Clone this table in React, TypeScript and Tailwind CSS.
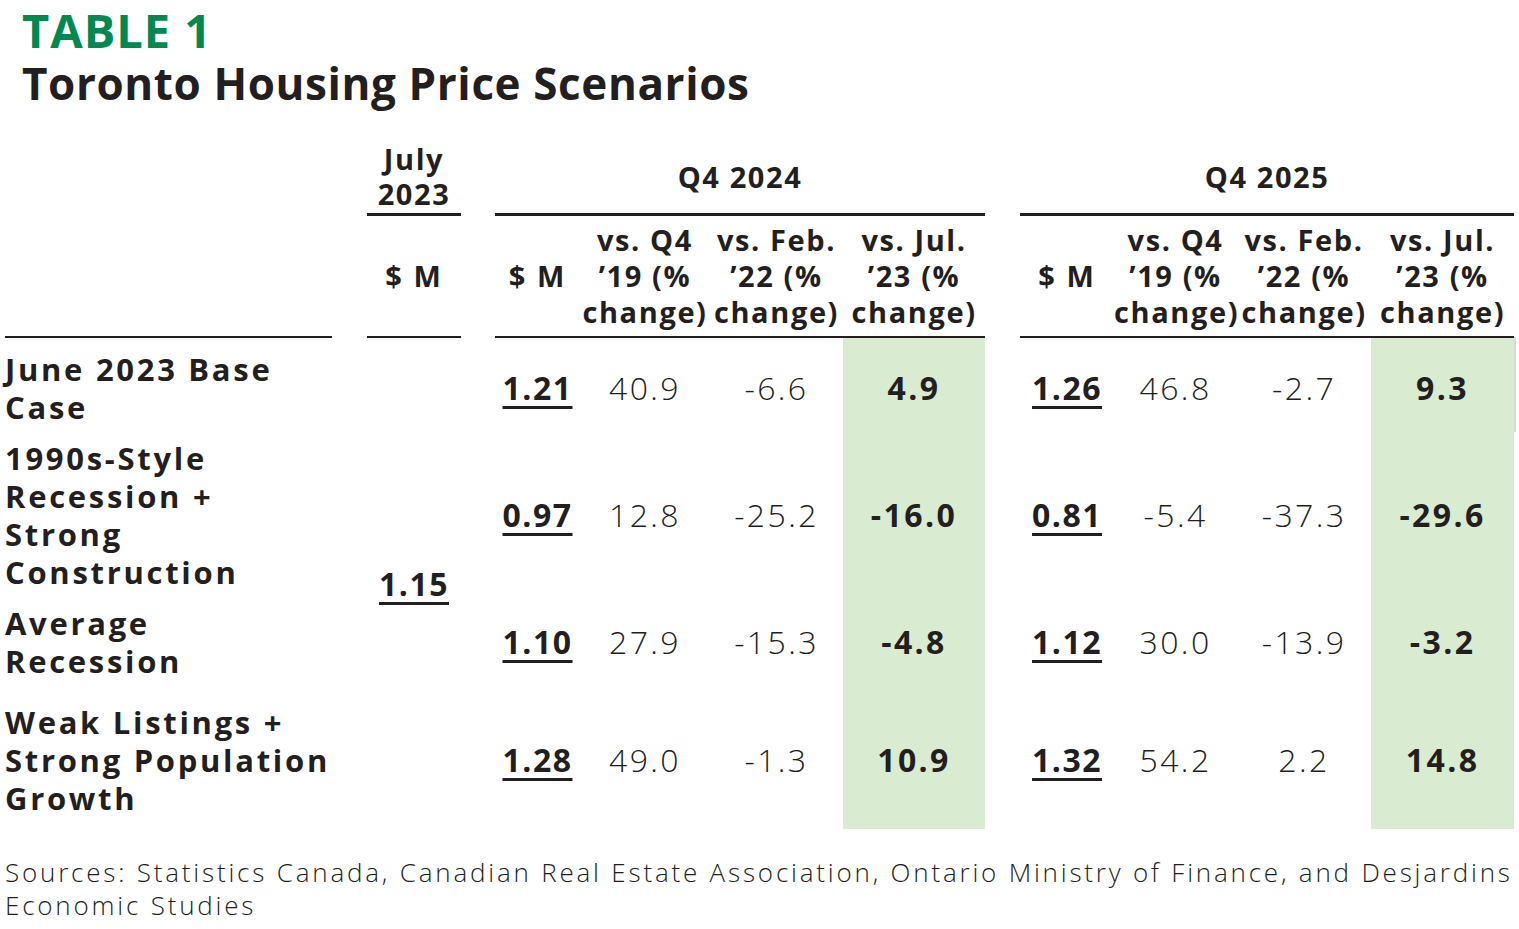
import React from 'react';

type Group = { sm: string; vsQ4: string; vsFeb: string; vsJul: string };

const ROWS: { label: string[]; q24: Group; q25: Group; pad: string }[] = [
  {
    label: ['June 2023 Base', 'Case'],
    q24: { sm: '1.21', vsQ4: '40.9', vsFeb: '-6.6', vsJul: '4.9' },
    q25: { sm: '1.26', vsQ4: '46.8', vsFeb: '-2.7', vsJul: '9.3' },
    pad: 'pt-[12px] pb-[6px]',
  },
  {
    label: ['1990s-Style', 'Recession +', 'Strong', 'Construction'],
    q24: { sm: '0.97', vsQ4: '12.8', vsFeb: '-25.2', vsJul: '-16.0' },
    q25: { sm: '0.81', vsQ4: '-5.4', vsFeb: '-37.3', vsJul: '-29.6' },
    pad: 'pt-[7px] pb-[6px]',
  },
  {
    label: ['Average', 'Recession'],
    q24: { sm: '1.10', vsQ4: '27.9', vsFeb: '-15.3', vsJul: '-4.8' },
    q25: { sm: '1.12', vsQ4: '30.0', vsFeb: '-13.9', vsJul: '-3.2' },
    pad: 'pt-[7px] pb-[11px]',
  },
  {
    label: ['Weak Listings +', 'Strong Population', 'Growth'],
    q24: { sm: '1.28', vsQ4: '49.0', vsFeb: '-1.3', vsJul: '10.9' },
    q25: { sm: '1.32', vsQ4: '54.2', vsFeb: '2.2', vsJul: '14.8' },
    pad: 'pt-[12px] pb-[12px]',
  },
];

const Money: React.FC<{ v: string }> = ({ v }) => (
  <span className="text-[32px] font-bold tracking-[1.5px] underline decoration-[3px] underline-offset-[6px]">{v}</span>
);

const SubHead: React.FC<{ lines: string[] }> = ({ lines }) => (
  <th className="border-b-2 border-[#231f20] py-[6px] text-center align-middle text-[29px] font-bold leading-[36px] tracking-[1.6px]">
    {lines.map((l, i) => (
      <div key={i} className="whitespace-nowrap">
        {l}
      </div>
    ))}
  </th>
);

const GroupHead: React.FC = () => (
  <>
    <th className="border-b-2 border-[#231f20] text-center align-middle text-[29px] font-bold tracking-[2px]">$ M</th>
    <SubHead lines={['vs. Q4', '\u201919 (%', 'change)']} />
    <SubHead lines={['vs. Feb.', '\u201922 (%', 'change)']} />
    <SubHead lines={['vs. Jul.', '\u201923 (%', 'change)']} />
  </>
);

const GroupCells: React.FC<{ g: Group; pad: string; edge?: boolean }> = ({ g, pad, edge }) => (
  <>
    <td className={`${pad} text-center align-middle`}>
      <Money v={g.sm} />
    </td>
    <td className={`${pad} text-center align-middle`}>{g.vsQ4}</td>
    <td className={`${pad} text-center align-middle`}>{g.vsFeb}</td>
    <td
      className={`${pad} bg-[#d9ebd1] text-center align-middle font-bold ${
        edge ? 'shadow-[2px_0_0_#dadada]' : ''
      }`}
    >
      {g.vsJul}
    </td>
  </>
);

export default function App() {
  return (
    <div className="min-h-[929px] w-[1519px] bg-white font-['Open_Sans',sans-serif] text-[#231f20]">
      <div className="pl-[22px] pt-[4px]">
        <div className="text-[47px] font-bold leading-[52px] tracking-[1px] text-[#00894f]">TABLE 1</div>
        <div className="mt-[1px] text-[44px] font-bold leading-[52px] tracking-[0.6px]">Toronto Housing Price Scenarios</div>
      </div>

      <div className="pl-[5px] pt-[32px]">
        <table className="w-[1509px] table-fixed border-collapse">
          <colgroup>
            <col className="w-[327px]" />
            <col className="w-[35px]" />
            <col className="w-[94px]" />
            <col className="w-[34px]" />
            <col className="w-[85px]" />
            <col className="w-[130px]" />
            <col className="w-[133px]" />
            <col className="w-[142px]" />
            <col className="w-[35px]" />
            <col className="w-[94px]" />
            <col className="w-[123px]" />
            <col className="w-[134px]" />
            <col className="w-[143px]" />
          </colgroup>
          <thead>
            <tr>
              <th />
              <th />
              <th className="border-b-[3px] border-[#231f20] pb-[2px] text-center align-bottom text-[29px] font-bold leading-[35px] tracking-[1.6px]">
                <div>July</div>
                <div>2023</div>
              </th>
              <th />
              <th colSpan={4} className="border-b-[3px] border-[#231f20] text-center align-middle text-[29px] font-bold tracking-[1.6px]">
                Q4 2024
              </th>
              <th />
              <th colSpan={4} className="border-b-[3px] border-[#231f20] text-center align-middle text-[29px] font-bold tracking-[1.6px]">
                Q4 2025
              </th>
            </tr>
            <tr>
              <th className="border-b-2 border-[#231f20]" />
              <th />
              <th className="border-b-2 border-[#231f20] text-center align-middle text-[29px] font-bold tracking-[2px]">$ M</th>
              <th />
              <GroupHead />
              <th />
              <GroupHead />
            </tr>
          </thead>
          <tbody className="text-[32px] font-light leading-[38px] tracking-[2.4px]">
            {ROWS.map((r, i) => (
              <tr key={i}>
                <td className={`${r.pad} align-middle text-[31px] font-bold tracking-[2.7px]`}>
                  {r.label.map((l, j) => (
                    <div key={j} className="whitespace-nowrap">
                      {l}
                    </div>
                  ))}
                </td>
                <td />
                {i === 0 && (
                  <td rowSpan={4} className="text-center align-middle">
                    <Money v="1.15" />
                  </td>
                )}
                <td />
                <GroupCells g={r.q24} pad={r.pad} />
                <td />
                <GroupCells g={r.q25} pad={r.pad} edge={i === 0} />
              </tr>
            ))}
          </tbody>
        </table>
      </div>

      <div className="pl-[5px] pt-[27px] text-[26px] font-light leading-[33px] tracking-[2.8px]">
        Sources: Statistics Canada, Canadian Real Estate Association, Ontario Ministry of Finance, and Desjardins
        <br />
        Economic Studies
      </div>
    </div>
  );
}
